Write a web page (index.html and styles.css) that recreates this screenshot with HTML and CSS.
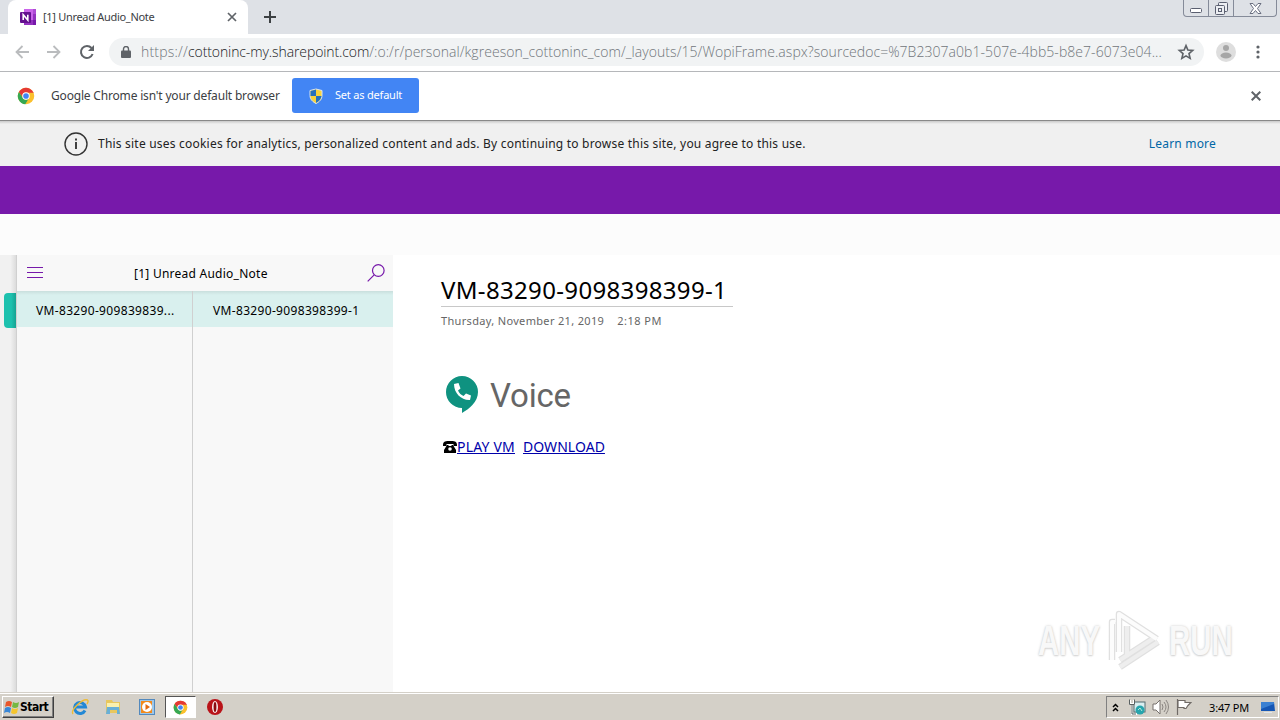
FILE: index.html
```html
<!DOCTYPE html>
<html lang="en">
<head>
  <meta charset="UTF-8">
  <meta name="viewport" content="width=device-width, initial-scale=1.0">
  <title>[1] Unread Audio_Note</title>
  <link rel="stylesheet" href="styles.css">
</head>
<body>
  <svg class="sprite" aria-hidden="true">
    <symbol id="chrome" viewBox="0 0 48 48">
      <circle cx="24" cy="24" r="22" fill="#fbc02d"/>
      <path d="M5 13A22 22 0 0 1 43 13L45 15H24A9 9 0 0 0 16 29Z" fill="#e53935"/>
      <path d="M5 13A22 22 0 0 0 22 46L32 29A9 9 0 0 1 16 29Z" fill="#35a853"/>
      <circle cx="24" cy="24" r="10" fill="#fff"/>
      <circle cx="24" cy="24" r="7.5" fill="#4285f4"/>
    </symbol>
  </svg>

  <header class="tab-strip">
    <div class="tab">
      <svg class="onenote" viewBox="0 0 16 16" width="16" height="16">
        <path d="M4 0h12v16H4z" fill="#ca64ea"/>
        <path d="M13 0h3v5h-3z" fill="#ae4bd5"/>
        <path d="M13 5h3v6h-3z" fill="#9332bf"/>
        <path d="M13 11h3v5h-3z" fill="#7719aa"/>
        <path d="M4 11h9v5H4z" fill="#9332bf"/>
        <rect y="3" width="11" height="11" rx="1" fill="#64108f"/>
        <path d="M3.200 11V5.700L7.800 11V5.700" fill="none" stroke="#fff" stroke-width="1.600"/>
      </svg>
      <span class="tab-title">[1] Unread Audio_Note</span>
      <svg class="tab-close" viewBox="0 0 10 10" width="10" height="10"><path d="M1 1l8 8M9 1L1 9" stroke="#5f6368" stroke-width="1.700"/></svg>
    </div>
    <svg class="new-tab" viewBox="0 0 12 12" width="12" height="12"><path d="M6 0v12M0 6h12" stroke="#3c4043" stroke-width="2"/></svg>
    <div class="window-buttons">
      <span><svg viewBox="0 0 12 5" width="12" height="5"><rect x=".5" y=".5" width="11" height="4" rx="1" fill="#fff" stroke="#5a5f70"/></svg></span>
      <span><svg viewBox="0 0 13 13" width="13" height="13"><g fill="#eceef2" stroke="#5a5f70"><rect x="3.500" y=".5" width="9" height="9" rx="1"/><rect x=".5" y="3.500" width="9" height="9" rx="1"/><rect x="3.500" y="6.500" width="3" height="3"/></g></svg></span>
      <span><svg viewBox="0 0 13 11" width="13" height="11"><path d="M1 .5h3l2.500 3 2.500-3h3L8.500 5.500 12 10.500H9L6.500 7.500 4 10.500H1L4.500 5.500z" fill="#fff" stroke="#6a6f80"/></svg></span>
    </div>
  </header>

  <div class="toolbar">
    <svg class="nav" viewBox="0 0 14 14" width="14" height="14"><path d="M14 7H1.500M7.500 1L1.500 7l6 6" fill="none" stroke="#babcbe" stroke-width="1.800"/></svg>
    <svg class="nav" viewBox="0 0 14 14" width="14" height="14"><path d="M0 7h12.500M6.500 1l6 6-6 6" fill="none" stroke="#babcbe" stroke-width="1.800"/></svg>
    <svg class="nav" viewBox="0 0 16 16" width="16" height="16"><path d="M13.600 10A6 6 0 1 1 12.500 4" fill="none" stroke="#5f6368" stroke-width="2"/><path d="M15 1v6H9z" fill="#5f6368"/></svg>
    <div class="omnibox">
      <svg class="lock" viewBox="0 0 10 12" width="10" height="12"><rect y="4.500" width="10" height="7.500" rx="1" fill="#5f6368"/><path d="M2.500 5V3a2.500 2.500 0 0 1 5 0v2" fill="none" stroke="#5f6368" stroke-width="1.400"/></svg>
      <div class="url"><span class="scheme">https://</span><span class="domain">cottoninc-my.sharepoint.com</span><span class="path">/:o:/r/personal/kgreeson_cottoninc_com/_layouts/15/WopiFrame.aspx?sourcedoc=%7B2307a0b1-507e-4bb5-b8e7-6073e04...</span></div>
      <svg class="star" viewBox="0 0 24 24" width="18" height="18"><path d="M12 3.500l2.500 5.900 6.400.6-4.900 4.200 1.500 6.300L12 17.200l-5.500 3.300L8 14.200 3.100 10l6.400-.6z" fill="none" stroke="#5f6368" stroke-width="2.200"/></svg>
    </div>
    <svg class="avatar" viewBox="0 0 20 20" width="20" height="20"><circle cx="10" cy="10" r="10" fill="#dedede"/><circle cx="10" cy="6" r="3" fill="#a6a6a6"/><ellipse cx="10" cy="13.500" rx="5.500" ry="3" fill="#a6a6a6"/></svg>
    <svg class="menu" viewBox="0 0 4 14" width="4" height="14"><g fill="#5f6368"><circle cx="2" cy="2" r="1.600"/><circle cx="2" cy="7" r="1.600"/><circle cx="2" cy="12" r="1.600"/></g></svg>
  </div>

  <div class="infobar">
    <svg width="18" height="18"><use href="#chrome"/></svg>
    <span class="infobar-text">Google Chrome isn't your default browser</span>
    <button class="default-btn">
      <svg viewBox="0 0 14 16" width="14" height="16"><path d="M7 1l6 1.500v5c0 4-3 6.500-6 8-3-1.500-6-4-6-8v-5z" fill="#f7d33c" stroke="#dbe5ee"/><path d="M7 1.500V8H1.500V3zM7 8h5.500C12 11.500 9 14 7 15z" fill="#2671bd"/></svg>
      <span>Set as default</span>
    </button>
    <svg class="infobar-close" viewBox="0 0 10 10" width="10" height="10"><path d="M.7.7l8.600 8.600M9.300.7L.7 9.300" stroke="#5f6368" stroke-width="2"/></svg>
  </div>

  <div class="cookie-bar">
    <svg viewBox="0 0 24 24" width="24" height="24"><circle cx="12" cy="12" r="11" fill="none" stroke="#333" stroke-width="1.400"/><path d="M12 10v7M12 6.500v2" stroke="#222" stroke-width="1.700"/></svg>
    <span class="cookie-text">This site uses cookies for analytics, personalized content and ads. By continuing to browse this site, you agree to this use.</span>
    <a class="learn-more">Learn more</a>
  </div>
  <div class="app-header"></div>
  <div class="ribbon"></div>

  <main class="workspace">
    <div class="gutter"><div class="section-tab"></div></div>
    <aside class="sidebar">
      <div class="sidebar-header">
        <svg viewBox="0 0 16 12" width="16" height="12"><path d="M0 .5h16M0 5.500h16M0 10.500h16" stroke="#7719aa" stroke-width="1"/></svg>
        <span class="notebook-name">[1] Unread Audio_Note</span>
        <svg viewBox="0 0 18 18" width="18" height="18"><g fill="none" stroke="#7719aa" stroke-width="1.200"><circle cx="11.300" cy="6.500" r="5.800"/><path d="M7.200 10.800L.7 17.300"/></g></svg>
      </div>
      <div class="lists">
        <div class="sections"><div class="item"><span>VM-83290-909839839...</span></div></div>
        <div class="pages"><div class="item"><span>VM-83290-9098398399-1</span></div></div>
      </div>
    </aside>
    <article class="page">
      <h1><span>VM-83290-9098398399-1</span></h1>
      <div class="page-date"><span class="date">Thursday, November 21, 2019</span><span class="time">2:18 PM</span></div>
      <div class="voice">
        <svg viewBox="0 0 32 37" width="32" height="37"><path d="M16 0a16 16 0 0 1 16 16c0 10-9 17-16 21v-5A16 16 0 0 1 16 0z" fill="#0f9280"/><path d="M8 8l4.500-1 2 5.500-2.500 2c1.500 3 3 4.300 5.500 5.500l2.500-2.500 5 2-1 4.500C15.500 24.500 8 17.500 8 8z" fill="#fff"/></svg>
        <span class="voice-text">Voice</span>
      </div>
      <div class="links"><svg viewBox="0 0 14 12" width="14" height="12"><path d="M0 4C0 0 3 0 7 0s7 0 7 4v1h-3.500V3h-7v2H0z"/><path d="M4 4h1.500v1h3V4H10l3 5v3H1V9z"/><circle cx="7" cy="8" r="1.800" fill="#fff"/></svg><a class="play">PLAY VM</a><a class="download">DOWNLOAD</a></div>
    </article>
    <div class="watermark">
      <span class="any">ANY</span>
      <svg viewBox="0 0 56 62" width="56" height="62">
        <g fill="none" stroke-linejoin="round">
          <path d="M12 42V4l38 25M5 50V12h3M13 57l38-25M13 50l34-22M20 16v31" stroke="#e0e0e0" stroke-width="6.500"/>
          <path d="M13 57l38-25M13 50l34-22M20 16v31" stroke="#eee" stroke-width="4"/>
          <path d="M12 42V4l38 25M5 50V12h3" stroke="#fcfcfc" stroke-width="4"/>
        </g>
      </svg>
      <span class="run">RUN</span>
    </div>
  </main>

  <footer class="taskbar">
    <button class="start">
      <svg viewBox="0 0 16 16" width="16" height="16"><path d="M2 3q3-2 6 0L7 8Q4 6 1 8z" fill="#e9572b"/><path d="M9 3q3 2 6 0l-1 5q-3 2-6 0z" fill="#75b843"/><path d="M1 9q3-2 6 0l-1 5q-3-2-6 0z" fill="#3987d7"/><path d="M8 9q3 2 6 0l-1 5q-3 2-6 0z" fill="#f5c52d"/></svg>
      <span>Start</span>
    </button>
    <div class="quick-launch">
      <svg class="task-icon" viewBox="0 0 18 18" width="18" height="18"><path d="M14 12.500A5.500 5.500 0 1 1 14.500 9H5" fill="none" stroke="#2388d5" stroke-width="3"/><path d="M2 16C-1 12 12 0 16.500 2c1 .6.500 2.500-.5 4" fill="none" stroke="#efbc35" stroke-width="1.400"/></svg>
      <svg class="task-icon" viewBox="0 0 18 18" width="18" height="18"><path d="M2 2h6l1 2h7v11H2z" fill="#e8c75e"/><path d="M3 5h12v7H3z" fill="#faf0ae"/><path d="M3 9h12l1 7h-3v-4H6v4H2z" fill="#68afd7"/></svg>
      <svg class="task-icon" viewBox="0 0 18 18" width="18" height="18"><rect x="1.500" y="1.500" width="15" height="15" fill="#9dc7ea" stroke="#5389bd"/><rect x="3" y="3" width="11" height="12" fill="#f28a1c"/><circle cx="9" cy="9" r="5" fill="#fff"/><path d="M7.500 6v6l4.500-3z" fill="#e36b11"/></svg>
      <span class="active-task"><svg width="15" height="15"><use href="#chrome"/></svg></span>
      <svg class="task-icon" viewBox="0 0 18 18" width="18" height="18"><circle cx="9" cy="9" r="8" fill="#b91319"/><ellipse cx="9" cy="9" rx="3" ry="6" fill="#f9eaea"/><ellipse cx="9" cy="9" rx="1.400" ry="5" fill="#8b0b10"/></svg>
    </div>
    <div class="tray">
      <svg viewBox="0 0 7 9" width="7" height="9"><path d="M1 4l2.500-2.500L6 4M1 8l2.500-2.500L6 8" fill="none" stroke="#000" stroke-width="1.500"/></svg>
      <svg class="network" viewBox="0 0 17 17" width="17" height="17"><rect x="5" y="3" width="11" height="10" fill="#d9eef0" stroke="#536b70"/><path d="M1 1v4h4V1M3 5v10h5" fill="none" stroke="#fff" stroke-width="2"/><path d="M.5.500v5h5v-5M3 5v10h4" fill="none" stroke="#596061"/><circle cx="11" cy="11" r="4.500" fill="#27a5ad"/><path d="M9 11l2-2 2 3" fill="none" stroke="#b4e8db"/></svg>
      <svg class="speaker" viewBox="0 0 17 16" width="17" height="16"><path d="M1 5h3l4-4v14l-4-4H1z" fill="#fff" stroke="#77716d"/><path d="M10 5q2 3 0 6M12 3q4 5 0 10M14 1q5 7 0 14" fill="none" stroke="#8a8581"/></svg>
      <svg class="flag" viewBox="0 0 16 16" width="16" height="16"><path d="M1.500 0v16M2 1.500h7v2h6l-3 3-2 3H8v-1H2z" fill="#fff" stroke="#706b67" stroke-width="1.200"/></svg>
      <span class="clock">3:47 PM</span>
      <svg class="desktop-icon" viewBox="0 0 16 13" width="16" height="13"><path d="M1 1h13l1 9H1z" fill="#1556b4"/><path d="M1 1h13v2L1 8z" fill="#3a80d2"/><path d="M4 11h8v1H4z" fill="#dfe6ec"/></svg>
    </div>
  </footer>
</body>
</html>
```
FILE: styles.css
```css
* { box-sizing: border-box; }

body {
  margin: 0;
  width: 1280px;
  height: 720px;
  overflow: hidden;
  display: flex;
  flex-direction: column;
  background: #fff;
  color: #000;
  font-family: "Noto Sans", "Open Sans", sans-serif;
  font-size: 12px;
}

svg { display: block; flex: none; }
span, a { white-space: nowrap; }
.sprite { display: none; }
button { font-family: inherit; }

.tab-strip {
  height: 34px;
  flex: none;
  display: flex;
  background: #dee1e6;
  padding-left: 8px;
}

.tab {
  width: 240px;
  height: 34px;
  background: #fff;
  border-radius: 8px 8px 0 0;
  display: flex;
  align-items: center;
  padding: 0 11px 0 12px;
}

.tab-title {
  margin: -2px 0 0 7px;
  font-size: 11px;
  letter-spacing: -0.3px;
  color: #3c4043;
}

.tab-close { margin-left: auto; }
.new-tab { margin: 11px 0 0 16px; }

.window-buttons {
  display: flex;
  margin: 0 3px 0 auto;
  height: 17px;
  border: 1px solid #858b99;
  border-top: 0;
  border-radius: 0 0 4px 4px;
}

.window-buttons span {
  width: 25px;
  display: flex;
  justify-content: center;
  align-items: center;
  border-right: 1px solid #858b99;
}

.window-buttons span:first-child { align-items: flex-end; padding-bottom: 3px; }
.window-buttons span:last-child { width: 42px; border: 0; }

.toolbar {
  height: 38px;
  flex: none;
  display: flex;
  align-items: center;
  padding: 0 20px 2px 15px;
  border-bottom: 1px solid #b5b7ba;
}

.nav { margin-right: 18px; }

.omnibox {
  width: 1095px;
  height: 28px;
  margin-left: -4px;
  display: flex;
  align-items: center;
  padding: 0 9px 0 12px;
  border-radius: 14px;
  background: #f1f3f4;
}

.url {
  display: flex;
  margin-left: 10px;
  font-family: "Open Sans", sans-serif;
  font-weight: 300;
  font-size: 14px;
  color: #70757a;
}

.scheme { letter-spacing: 0.2px; }
.domain { color: #202124; letter-spacing: -0.1px; }
.path { letter-spacing: 0.05px; }
.star { margin-left: auto; }
.avatar { margin-left: 12px; }
.menu { margin-left: auto; }

.infobar {
  height: 49px;
  flex: none;
  display: flex;
  align-items: center;
  padding: 0 19px 1px 17px;
  border-bottom: 1px solid #898989;
}

.infobar-text {
  width: 229px;
  margin: -1px 12px 0 16px;
  letter-spacing: -0.18px;
  color: #3c4043;
}

.default-btn {
  width: 127px;
  height: 35px;
  display: flex;
  align-items: center;
  gap: 12px;
  padding: 0 17px;
  border: 0;
  border-radius: 3px;
  background: #4285f4;
  color: #fff;
  font-size: 11px;
  letter-spacing: -0.2px;
}

.default-btn span { margin-top: -2px; }
.infobar-close { margin-left: auto; }

.cookie-bar {
  height: 45px;
  flex: none;
  display: flex;
  align-items: center;
  padding: 0 64px;
  background: linear-gradient(#c9c9c9, #f0f0f0 3px);
}

.cookie-text { margin-left: 10px; color: #222; letter-spacing: 0.21px; }
.learn-more { margin-left: auto; color: #0067a6; letter-spacing: 0.2px; }

.app-header { height: 48px; flex: none; background: #7719aa; }
.ribbon { height: 41px; flex: none; background: #fcfcfc; }

.workspace {
  position: relative;
  flex: 1;
  min-height: 0;
  display: flex;
}

.gutter {
  width: 17px;
  padding: 38px 0 0 4px;
  background: linear-gradient(90deg, #f1f1f1 65%, #dcdcdc);
  border-right: 1px solid #d0d0d0;
}

.section-tab {
  height: 35px;
  border-radius: 4px 0 0 4px;
  background: linear-gradient(90deg, #1dc1ae 60%, #16a292);
}

.sidebar {
  width: 376px;
  display: flex;
  flex-direction: column;
  background: #f8f8f8;
}

.sidebar-header {
  height: 36px;
  display: flex;
  align-items: center;
  padding: 0 8px 0 10px;
}

.notebook-name { margin: 0 auto 0 91px; letter-spacing: 0.25px; }

.lists { display: flex; flex: 1; }
.sections { width: 176px; border-right: 1px solid #d0d0d0; }
.pages { flex: 1; }

.item {
  height: 36px;
  display: flex;
  align-items: center;
  padding: 2px 0 0 19px;
  letter-spacing: 0.33px;
  background: linear-gradient(#c9dfdd, #d9f0ee 4px);
}

.pages .item { padding-left: 20px; }

.page { padding: 20px 0 0 48px; }

.page h1 {
  width: 292px;
  height: 32px;
  margin: 0;
  border-bottom: 1px solid #c8c8c8;
  font-size: 24px;
  line-height: 30px;
  font-weight: 400;
  letter-spacing: 0.34px;
}

.page-date {
  display: flex;
  gap: 13px;
  margin-top: 6px;
  color: #666;
  font-size: 11px;
  line-height: 16px;
  letter-spacing: 0.33px;
}

.time { letter-spacing: 0.5px; }

.voice { display: flex; margin: 47px 0 0 5px; height: 37px; }

.voice-text {
  margin-left: 12px;
  font-family: Roboto, sans-serif;
  font-size: 33px;
  line-height: 39px;
  letter-spacing: -0.2px;
  color: #666;
}

.links {
  display: flex;
  align-items: center;
  margin: 24px 0 0 2px;
  font-size: 14px;
  line-height: 20px;
}

.links a { color: #00a; text-decoration: underline; }
.play { letter-spacing: 0.2px; }
.download { margin-left: 8px; letter-spacing: 0.05px; }

/* watermark floats over the page canvas */
.watermark {
  position: absolute;
  right: 47px;
  bottom: 20px;
  display: flex;
  align-items: center;
  font-family: "Liberation Sans", sans-serif;
  font-weight: 700;
  font-size: 42px;
  color: #f8f8f8;
  text-shadow: 0 0 3px #ccc, 0 1px 2px #d8d8d8;
}

.any, .run { width: 64px; transform: scaleX(0.7); transform-origin: left; }
.run { margin-left: 6px; }
.watermark svg { margin-left: 5px; }

.taskbar {
  height: 28px;
  flex: none;
  display: flex;
  align-items: center;
  padding: 1px 0 0 2px;
  background: #d4d0c8;
  border-top: 1px solid #d4d0c8;
  box-shadow: inset 0 1px #fff;
}

.start {
  width: 52px;
  height: 22px;
  display: flex;
  align-items: center;
  padding: 0 1px;
  background: #d4d0c8;
  border: 1px solid;
  border-color: #fff #404040 #404040 #fff;
  box-shadow: inset -1px -1px #808080;
  font: bold 12px "DejaVu Sans Condensed", sans-serif;
  letter-spacing: -0.5px;
}

.quick-launch { display: flex; align-items: center; margin-left: 17px; }
.task-icon { margin-right: 15px; }
.task-icon:nth-child(3) { margin-left: 1px; }

.active-task {
  width: 31px;
  height: 22px;
  display: flex;
  align-items: center;
  justify-content: center;
  margin: 0 10px 0 -6px;
  background: #fff;
  border: 1px solid;
  border-color: #555 #fff #fff #555;
}

.tray {
  width: 173px;
  height: 22px;
  display: flex;
  align-items: center;
  margin: 0 1px 0 auto;
  padding: 0 2px 0 5px;
  border: 1px solid;
  border-color: #808080 #fff #fff #808080;
}

.network { margin-left: 10px; }
.speaker { margin-left: 6px; }
.flag { margin-left: 7px; }
.clock { margin-left: auto; font-size: 11px; letter-spacing: -0.2px; }
.desktop-icon { margin-left: 11px; }
```
